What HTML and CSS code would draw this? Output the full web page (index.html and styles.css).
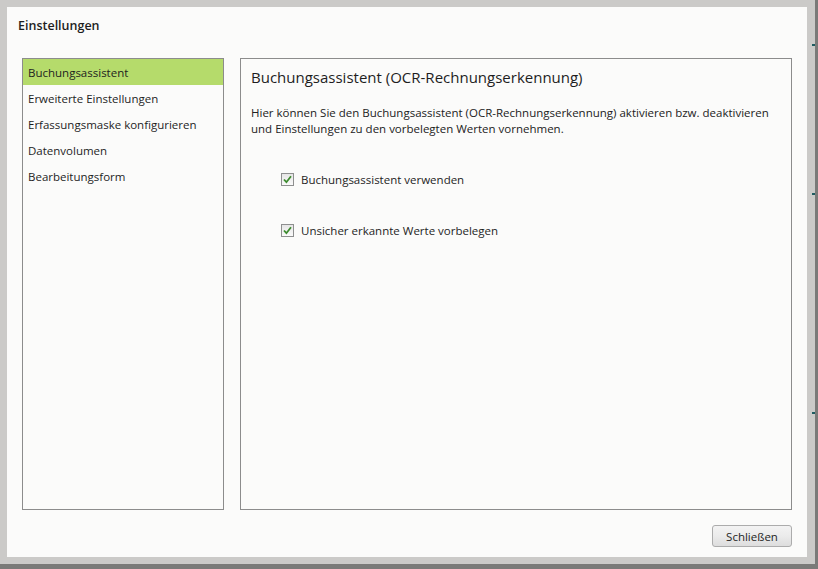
FILE: index.html
```html
<!DOCTYPE html>
<html lang="de">
<head>
    <meta charset="UTF-8">
    <meta name="viewport" content="width=device-width, initial-scale=1.0">
    <title>Einstellungen</title>
    <link rel="stylesheet" href="styles.css">
</head>
<body>
    <div class="frame">
        <div class="dialog">
            <div class="dialogTitle">Einstellungen</div>

            <div class="content">
                <ul class="navList">
                    <li class="navItem selected">Buchungsassistent</li>
                    <li class="navItem">Erweiterte Einstellungen</li>
                    <li class="navItem">Erfassungsmaske konfigurieren</li>
                    <li class="navItem">Datenvolumen</li>
                    <li class="navItem">Bearbeitungsform</li>
                </ul>

                <div class="pagePanel">
                    <h1 class="pageTitle">Buchungsassistent (OCR-Rechnungserkennung)</h1>
                    <p class="pageText">Hier können Sie den Buchungsassistent (OCR-Rechnungserkennung) aktivieren bzw. deaktivieren und Einstellungen zu den vorbelegten Werten vornehmen.</p>

                    <div class="options">
                        <label class="checkRow">
                            <span class="checkBox">
                                <svg width="11" height="11" viewBox="0 0 11 11"><path d="M2 5.5 L4.4 8.2 L9 2.2" fill="none" stroke="#3d8b2f" stroke-width="1.8"/></svg>
                            </span>
                            Buchungsassistent verwenden
                        </label>
                        <label class="checkRow">
                            <span class="checkBox">
                                <svg width="11" height="11" viewBox="0 0 11 11"><path d="M2 5.5 L4.4 8.2 L9 2.2" fill="none" stroke="#3d8b2f" stroke-width="1.8"/></svg>
                            </span>
                            Unsicher erkannte Werte vorbelegen
                        </label>
                    </div>
                </div>
            </div>

            <div class="footer">
                <button class="closeButton">Schließen</button>
            </div>
        </div>

        <!-- bits of the window behind -->
        <span class="behindMark mark1"></span>
        <span class="behindMark mark2"></span>
        <span class="behindMark mark3"></span>
    </div>
</body>
</html>
```

FILE: styles.css
```css
body {
    margin: 0;
    background-color: #7a7a78;
    font-family: "Open Sans", "Liberation Sans", sans-serif;
    color: #1e1e1e;
}

.frame {
    position: relative;
    width: 800px;
    height: 550px;
    padding: 7px 8px 7px 7px;
    background-color: #cbcac8;
}

.dialog {
    display: flex;
    flex-direction: column;
    width: 800px;
    height: 550px;
    background-color: #fbfbfa;
    box-sizing: border-box;
    padding: 0 15px;
}

.dialogTitle {
    font-size: 12.5px;
    font-weight: 600;
    height: 36px;
    padding-top: 10px;
    margin-left: -4px;
    margin-bottom: 15px;
    box-sizing: border-box;
}

.content {
    display: flex;
    gap: 16px;
    height: 452px;
}

.navList {
    list-style: none;
    margin: 0;
    padding: 0;
    width: 202px;
    box-sizing: border-box;
    border: 1px solid #8c8c8c;
}

.navItem {
    height: 26px;
    line-height: 28px;
    overflow: hidden;
    padding-left: 5px;
    font-size: 11.5px;
    white-space: nowrap;
}

.selected {
    background-color: #b5db6b;
}

.pagePanel {
    flex: 1;
    box-sizing: border-box;
    border: 1px solid #8c8c8c;
    padding: 0 10px;
}

.pageTitle {
    font-size: 15px;
    font-weight: normal;
    margin: 7px 0 0 0;
    line-height: 22px;
}

.pageText {
    font-size: 11.5px;
    line-height: 16px;
    margin: 17px 0 0 0;
    color: #222;
}

.options {
    display: flex;
    flex-direction: column;
    gap: 33px;
    margin-top: 33px;
    padding-left: 30px;
}

.checkRow {
    display: flex;
    align-items: center;
    gap: 7px;
    font-size: 11.5px;
    height: 18px;
}

.checkBox {
    display: flex;
    align-items: center;
    justify-content: center;
    width: 13px;
    height: 13px;
    box-sizing: border-box;
    border: 1px solid #8e8f8f;
    background: linear-gradient(#e6e6e6, #fafafa);
}

.footer {
    display: flex;
    justify-content: flex-end;
    padding-top: 15px;
}

.closeButton {
    width: 80px;
    height: 22px;
    font-family: inherit;
    font-size: 11.5px;
    color: #1e1e1e;
    border: 1px solid #acacac;
    border-radius: 3px;
    background: linear-gradient(#f3f3f3, #ebebeb 50%, #dddddd);
    padding: 0;
}

.behindMark {
    position: absolute;
    right: 0;
    width: 3px;
    height: 2px;
    background-color: #1f5c61;
}

.mark1 { top: 44px; }
.mark2 { top: 193px; }
.mark3 { top: 412px; }
```
